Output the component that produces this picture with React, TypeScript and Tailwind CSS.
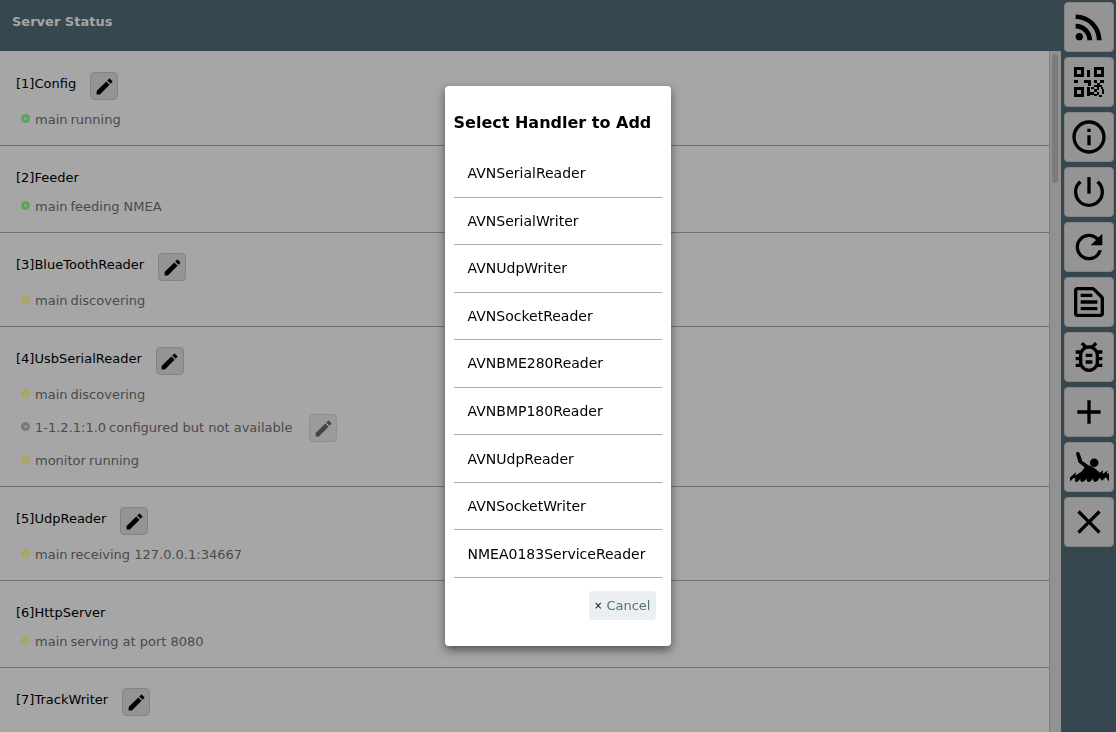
import React from "react";
import {
  MdRssFeed,
  MdOutlineInfo,
  MdPowerSettingsNew,
  MdRefresh,
  MdOutlineTextSnippet,
  MdOutlineBugReport,
  MdAdd,
  MdClose,
  MdEdit,
} from "react-icons/md";

type Dot = "green" | "yellow" | "gray";
type Child = { dot: Dot; name: string; text: string; edit?: boolean };
type Handler = { id: number; name: string; edit: boolean; children: Child[] };

const handlers: Handler[] = [
  { id: 1, name: "Config", edit: true, children: [{ dot: "green", name: "main", text: "running" }] },
  { id: 2, name: "Feeder", edit: false, children: [{ dot: "green", name: "main", text: "feeding NMEA" }] },
  { id: 3, name: "BlueToothReader", edit: true, children: [{ dot: "yellow", name: "main", text: "discovering" }] },
  {
    id: 4,
    name: "UsbSerialReader",
    edit: true,
    children: [
      { dot: "yellow", name: "main", text: "discovering" },
      { dot: "gray", name: "1-1.2.1:1.0", text: "configured but not available", edit: true },
      { dot: "yellow", name: "monitor", text: "running" },
    ],
  },
  { id: 5, name: "UdpReader", edit: true, children: [{ dot: "yellow", name: "main", text: "receiving 127.0.0.1:34667" }] },
  { id: 6, name: "HttpServer", edit: false, children: [{ dot: "yellow", name: "main", text: "serving at port 8080" }] },
  { id: 7, name: "TrackWriter", edit: true, children: [] },
];

const options = [
  "AVNSerialReader",
  "AVNSerialWriter",
  "AVNUdpWriter",
  "AVNSocketReader",
  "AVNBME280Reader",
  "AVNBMP180Reader",
  "AVNUdpReader",
  "AVNSocketWriter",
  "NMEA0183ServiceReader",
];

const dotClass: Record<Dot, string> = {
  green: "border-[#5aa45c] bg-[#86ac86]",
  yellow: "border-[#aaa762] bg-[#a6a47c]",
  gray: "border-[#7a7a7a] bg-[#959595]",
};

function QrIcon() {
  return (
    <svg viewBox="0 0 30 30" className="size-[30px]" fill="#000" shapeRendering="crispEdges" aria-hidden="true">
      <path
        fillRule="evenodd"
        d="M0 0h10v10H0zM3 3v4h4V3zM20 0h10v10H20zM23 3v4h4V3zM0 20h10v10H0zM3 23v4h4v-4z"
      />
      <path d="M13 3h3v7h-3zM0 13h4v3H0zM10 13h7v6h-3v-3h-4zM20 13h3v3h-3zM26 13h4v3h-4zM23 16h3v4h-3zM20 18h3v2h-3zM26 18h2v2h-2zM13 20h3v9h-3zM16 25h4v3h-4zM17 20h3v2h-3zM20 22h3v3h-3zM20 27h3v2h-3zM23 20h2v3h-2zM27 20h2v2h-2zM28 22h2v5h-2zM23 25h2v3h-2zM25 28h3v2h-3z" />
    </svg>
  );
}

function SwimmerIcon() {
  return (
    <svg viewBox="0 0 39 30" className="h-[30px] w-[39px]" fill="#000" aria-hidden="true">
      <circle cx="24.200" cy="10.700" r="4.300" />
      <path d="M6 1.800C6-.4 9-.6 9.600 1.300L12.300 9l6.200 4.200c4.300 1.300 8.300 4.200 11.300 7.600l3.200-2.600-.4 3.800 5-3.400-.8 3.600 2.200-1.300V29.500l-2.300-3.200-1-1-3.700 3.500-2.500-3.300c-.8 2.300-2.400 4.300-4.600 4.500-1.200-.3-1.800-2-2-3.500-1.200 1.800-2.700 3.500-4.600 3.500-1.300-.4-1.700-2-1.700-3.500-1.400 1.900-3 3.500-5 3.500-1.200-.3-1.500-2-1.200-3.500-1.300 1.800-2.500 3.500-4.300 3.500-1.700-.4-1.500-2.300-.5-4L3 26.600 0 29.500v-4l5.800-5.200-.3 3.200L12 19.300l2.500-4L8.500 10.500z" />
    </svg>
  );
}

const tools: { label: string; icon: React.ReactNode }[] = [
  { label: "Connection", icon: <MdRssFeed className="size-10" /> },
  { label: "Address", icon: <QrIcon /> },
  { label: "Info", icon: <MdOutlineInfo className="size-10" /> },
  { label: "Shutdown", icon: <MdPowerSettingsNew className="size-10" /> },
  { label: "Restart", icon: <MdRefresh className="size-10" /> },
  { label: "Log", icon: <MdOutlineTextSnippet className="size-10" /> },
  { label: "Debug", icon: <MdOutlineBugReport className="size-10" /> },
  { label: "Add", icon: <MdAdd className="size-10" /> },
  { label: "Man overboard", icon: <SwimmerIcon /> },
  { label: "Close", icon: <MdClose className="size-10" /> },
];

function EditButton({ label, dim }: { label: string; dim?: boolean }) {
  return (
    <button
      aria-label={label}
      className={
        "flex size-7 shrink-0 items-center justify-center rounded border " +
        (dim ? "border-[#909090] bg-[#9b9b9b] text-[#444444]" : "border-[#848484] bg-[#949494] text-black")
      }
    >
      <MdEdit className="size-[21px]" />
    </button>
  );
}

function HandlerItem({ item }: { item: Handler }) {
  return (
    <li className={"border-b border-[#707070] pt-5 pl-4 " + (item.edit ? "pb-[11px]" : "pb-[14px]")}>
      <div className={"flex items-center gap-[14px] text-black " + (item.edit ? "h-7" : "h-6")}>
        <span className={item.edit ? "-mt-[5px]" : ""}>[{item.id}]{item.name}</span>
        {item.edit && <EditButton label={"Edit " + item.name} />}
      </div>
      <ul className="mt-[6px] flex flex-col">
        {item.children.map((c) => (
          <li
            key={c.name}
            className={
              "flex items-center pl-[5px] text-[#4a4a4a] " +
              (c.edit ? "h-[38px]" : item.edit ? "h-7" : "h-[22px]")
            }
          >
            <span className={"-mt-[3px] mr-[5px] size-[9px] shrink-0 rounded-full border-[3px] " + dotClass[c.dot]} />
            <span className="mr-[3px]">{c.name}</span>
            <span className="mr-[17px]">{c.text}</span>
            {c.edit && <EditButton label={"Edit " + c.name} dim />}
          </li>
        ))}
      </ul>
    </li>
  );
}

export default function App() {
  return (
    <div className="flex h-screen overflow-hidden bg-[#37474f] font-['DejaVu_Sans',sans-serif] text-[13px] leading-[18px]">
      <main className="flex min-w-0 flex-1 flex-col">
        <header className="h-[51px] shrink-0 px-3 pt-[13px] font-bold text-[#a6a6a6]">
          <h1>Server Status</h1>
        </header>
        <div className="flex min-h-0 flex-1 bg-[#a6a6a6]">
          <ul className="min-w-0 flex-1 overflow-hidden pt-px">
            {handlers.map((h) => (
              <HandlerItem key={h.id} item={h} />
            ))}
          </ul>
          <div className="w-3 border-l border-[#7d7d7d] bg-[#91918f] px-[2px] pt-[3px]">
            <div className="h-[129px] w-1.5 rounded-full bg-[#7c7c7c]" />
          </div>
        </div>
      </main>
      <nav className="flex w-[55px] flex-col items-end gap-[5px] pt-[2px] pr-[2px]">
        {tools.map((t) => (
          <button
            key={t.label}
            aria-label={t.label}
            className="flex size-[50px] shrink-0 items-center justify-center rounded border border-[#848484] bg-[#949494] text-black"
          >
            {t.icon}
          </button>
        ))}
      </nav>
      <div className="pointer-events-none fixed inset-0 flex items-center justify-center">
        <div
          role="dialog"
          aria-labelledby="dialog-title"
          className="pointer-events-auto flex flex-col rounded bg-white px-[9px] pt-[25px] pb-[26px] text-black shadow-[0_4px_10px_rgba(0,0,0,0.5)]"
        >
          <h2 id="dialog-title" className="text-[16px] leading-6 font-bold">
            Select Handler to Add
          </h2>
          <ul className="mt-[15px] grid h-[428px] auto-rows-fr text-[14px]">
            {options.map((o) => (
              <li key={o} className="border-b border-[#aaaaaa]">
                <button className="block h-full w-full pr-[17px] pl-[14px] text-left">{o}</button>
              </li>
            ))}
          </ul>
          <button className="mt-[13px] mr-1.5 flex h-[29px] items-center gap-1 self-end rounded bg-[#eceff1] pr-[6px] pl-[5px] text-[#546e7a]">
            <span className="text-[10px] text-black">×</span>
            Cancel
          </button>
        </div>
      </div>
    </div>
  );
}
